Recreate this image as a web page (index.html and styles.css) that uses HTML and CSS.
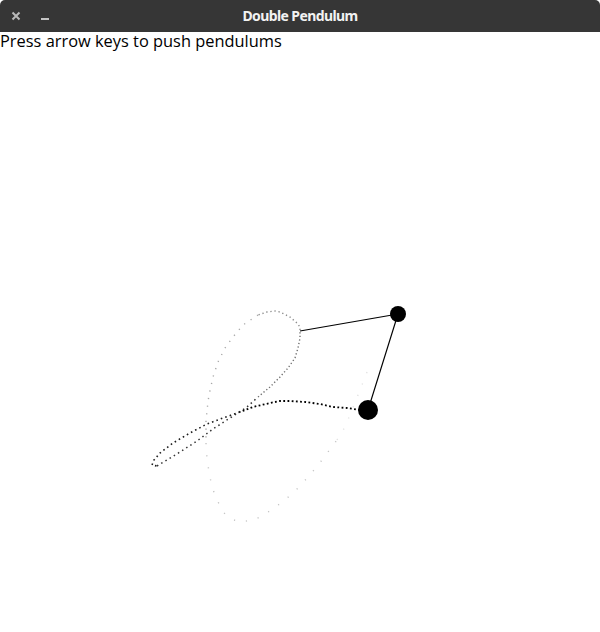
FILE: index.html
```html
<!DOCTYPE html>
<html>
<head>
<meta charset="utf-8">
<title>Double Pendulum</title>
<link rel="stylesheet" href="styles.css">
</head>
<body>
<header class="titlebar">
  <div class="controls">
    <svg class="btn-close" width="10" height="10" viewBox="0 0 10 10"><path d="M1.5 1.5 L8.5 8.5 M8.5 1.5 L1.5 8.5"/></svg>
    <span class="btn-min"></span>
  </div>
  <div class="title">Double Pendulum</div>
</header>
<main class="canvas-area">
  <p class="hint">Press arrow keys to push pendulums</p>
  <svg class="scene" width="600" height="583" viewBox="0 49 600 583">
    <g class="trace" fill="none" stroke-width="1.4">
      <polyline class="t8" points="337,440 345,427 352,410 358,395 364,380 369,367"/>
      <polyline class="t7" points="206,443 207,458 209,472 212,487 217,500 224,513 234,520 240,522 253,520 260,517 273,509 286,499 298,488 309,476 319,464 328,452 337,440"/>
      <polyline class="t6" points="258,315 255,317 243,325 233,337 225,348 218,362 213,377 209,395 208,402 206,420 206,443"/>
      <polyline class="t5" points="300,330 300,327 297,323 290,317 280,312 275,311 267,312 258,315"/>
      <polyline class="t4" points="258,397 270,387 280,377 288,368 295,358 298,348 300,338 300,330"/>
      <polyline class="t3" points="157,466 167,460 180,452 197,441 213,429 230,418 247,407 258,397"/>
      <polyline class="t2" points="240,412 223,418 207,424 190,433 173,443 160,453 154,460 152,465 157,466"/>
      <polyline class="t1" points="360,410 347,408 333,407 320,404 305,402 290,401 280,401 270,403 253,407 240,412"/>
    </g>
    <g class="rods" stroke="#000" stroke-width="1.2">
      <line x1="300" y1="331" x2="398" y2="314"/>
      <line x1="398" y1="314" x2="368" y2="410"/>
    </g>
    <circle cx="398" cy="314" r="8" fill="#000"/>
    <circle cx="368" cy="410" r="10" fill="#000"/>
  </svg>
</main>
</body>
</html>
```

FILE: styles.css
```css
html, body {
  margin: 0;
  padding: 0;
  background: #ffffff;
}

body {
  width: 600px;
  height: 632px;
  overflow: hidden;
  font-family: "Open Sans", "Noto Sans", sans-serif;
}

.titlebar {
  height: 32px;
  background: #363636;
  border-radius: 5px 5px 0 0;
  display: flex;
  align-items: center;
  position: relative;
}

.controls {
  display: flex;
  align-items: center;
  padding-left: 11px;
  gap: 20px;
  height: 32px;
}

.btn-close {
  display: block;
  margin-top: -1px;
}

.btn-close path {
  stroke: #b9b9b9;
  stroke-width: 2;
  fill: none;
}

.btn-min {
  display: block;
  width: 8px;
  height: 2px;
  background: #c4c4c4;
  margin-top: 5px;
}

.title {
  position: absolute;
  left: 0;
  right: 0;
  top: 0;
  height: 32px;
  line-height: 32px;
  text-align: center;
  color: #f2f2f2;
  font-family: "Noto Sans", "Open Sans", sans-serif;
  font-weight: 700;
  font-size: 14px;
  letter-spacing: -0.6px;
  pointer-events: none;
}

.canvas-area {
  display: flex;
  flex-direction: column;
}

.hint {
  margin: 0;
  font-size: 16.4px;
  line-height: 17px;
  color: #000;
  white-space: nowrap;
}

.scene {
  display: block;
}

.t1 { stroke: #000000; stroke-width: 1.8; stroke-dasharray: 1.8 2.4; }
.t2 { stroke: #1e1e1e; stroke-width: 1.6; stroke-dasharray: 1.6 3.1; }
.t3 { stroke: #333333; stroke-width: 1.5; stroke-dasharray: 1.5 3.4; }
.t4 { stroke: #707070; stroke-dasharray: 1.3 2.3; }
.t5 { stroke: #8a8a8a; stroke-dasharray: 1.3 2.8; }
.t6 { stroke: #a8a8a8; stroke-dasharray: 1.2 6.5; }
.t7 { stroke: #c4c4c4; stroke-dasharray: 1.2 11; }
.t8 { stroke: #e2e2e2; stroke-dasharray: 1.2 11; }
```
